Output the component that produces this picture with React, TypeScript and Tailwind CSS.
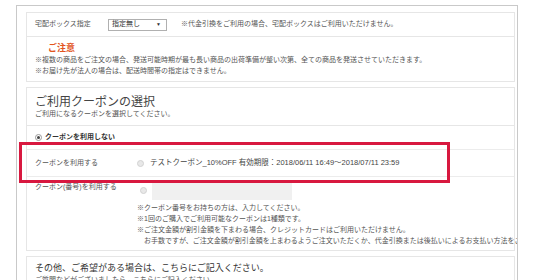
import React from "react";

const Radio = ({ checked = false }: { checked?: boolean }) => (
  <span
    className={
      checked
        ? "inline-flex h-[7px] w-[7px] shrink-0 items-center justify-center rounded-full border border-[#999] bg-white"
        : "inline-flex h-[7px] w-[7px] shrink-0 rounded-full border border-[#d2d2d2] bg-[#e8e8e8]"
    }
  >
    {checked && <span className="h-[3px] w-[3px] rounded-full bg-[#444]" />}
  </span>
);

const App = () => {
  return (
    <div className="relative h-[280px] w-[554px] overflow-hidden bg-white font-['Liberation_Sans','Noto_Sans_CJK_JP',sans-serif] text-[#555]">
      <div className="ml-[16px] mt-[5px] h-[300px] w-[502px] overflow-hidden border-l border-r border-t border-[#c9c9c9] pl-[9px] pr-[2px] pt-[6px]">
        {/* delivery box */}
        <div className="h-[70px] border border-[#e6e6e6]">
          <div className="flex h-[24px] items-center border-b border-[#e6e6e6] pl-[8px] text-[7px]">
            <span className="w-[73px] shrink-0">宅配ボックス指定</span>
            <div className="flex h-[12px] w-[59px] shrink-0 items-center justify-between border border-[#b0b0b0] pl-[3px] pr-[5px]">
              <span className="text-[#333]">指定無し</span>
              <span className="text-[5px] text-[#333]">▼</span>
            </div>
            <span className="ml-[14px] whitespace-nowrap">※代金引換をご利用の場合、宅配ボックスはご利用いただけません。</span>
          </div>
          <div className="pl-[8px] pt-[5px] text-[7px] leading-[11px]">
            <p className="pl-[13px] text-[9px] font-bold leading-[12px] text-[#e2551e]">ご注意</p>
            <p>※複数の商品をご注文の場合、発送可能時期が最も長い商品の出荷準備が整い次第、全ての商品を発送させていただきます。</p>
            <p>※お届け先が法人の場合は、配送時間帯の指定はできません。</p>
          </div>
        </div>

        {/* coupon */}
        <div className="mt-[5px] h-[164px] border border-[#e6e6e6]">
          <div className="border-b border-[#e6e6e6] pb-[6px] pl-[8px] pt-[7px]">
            <p className="text-[12px] leading-[14px] text-[#444]">ご利用クーポンの選択</p>
            <p className="text-[7px] leading-[10px]">ご利用になるクーポンを選択してください。</p>
          </div>
          <div className="flex h-[24px] items-center gap-[3px] border-b border-[#ececec] pl-[8px] text-[7px] font-bold text-[#333]">
            <Radio checked />
            <span>クーポンを利用しない</span>
          </div>
          <div className="flex h-[27px] items-center border-b border-[#ececec] pl-[8px] text-[7px]">
            <span className="w-[102px] shrink-0">クーポンを利用する</span>
            <Radio />
            <span className="ml-[6px] whitespace-nowrap text-[7.5px] text-[#444]">
              テストクーポン_10%OFF 有効期限：2018/06/11 16:49〜2018/07/11 23:59
            </span>
          </div>
          <div className="flex pl-[8px] text-[7px]">
            <span className="w-[102px] shrink-0 whitespace-nowrap pt-[5px] leading-[10px]">クーポン(番号)を利用する</span>
            <div className="min-w-0 flex-1 whitespace-nowrap">
              <div className="mt-[3px] flex items-center">
                <span className="ml-[3px] flex">
                  <Radio />
                </span>
                <div className="ml-[5px] h-[20px] w-[140px] shrink-0 bg-[#f0f0f0]" />
              </div>
              <div className="mt-[2px] leading-[11px]">
                <p>※クーポン番号をお持ちの方は、入力してください。</p>
                <p>※1回のご購入でご利用可能なクーポンは1種類です。</p>
                <p>※ご注文金額が割引金額を下まわる場合、クレジットカードはご利用いただけません。</p>
                <p className="pl-[7px]">
                  お手数ですが、ご注文金額が割引金額を上まわるようご注文いただくか、代金引換または後払いによるお支払い方法をご選択ください。
                </p>
              </div>
            </div>
          </div>
        </div>

        {/* other requests */}
        <div className="mt-[5px] border border-[#e6e6e6] pl-[8px] pt-[5px]">
          <p className="text-[9px] leading-[13px] text-[#333]">その他、ご希望がある場合は、こちらにご記入ください。</p>
          <p className="text-[7px] leading-[10px]">ご質問などがございましたら、こちらにご記入ください。</p>
        </div>
      </div>

      {/* highlight annotation */}
      <div className="absolute left-[19px] top-[142px] h-[41px] w-[431px] border-[3px] border-[#d8183f]" />
    </div>
  );
};

export default App;
